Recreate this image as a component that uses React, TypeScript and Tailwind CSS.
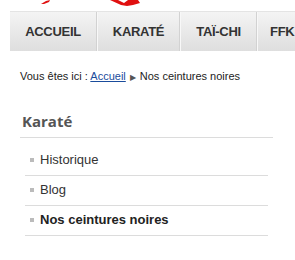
const navItems = ['ACCUEIL', 'KARATÉ', 'TAÏ-CHI', 'FFK'];
const sideLinks = [
  { label: 'Historique', active: false },
  { label: 'Blog', active: false },
  { label: 'Nos ceintures noires', active: true },
];

export default function App() {
  return (
    <div className="w-[295px] h-[260px] overflow-hidden bg-white font-['Liberation_Sans',Arial,sans-serif] text-[#333]">
      {/* bottom of the logo peeking above the menu */}
      <div className="h-[11px] relative">
        <svg className="absolute left-0 top-0" width="160" height="11" viewBox="0 0 160 11">
          <path d="M41 4 L46 1 L50 0 L49 2 L44 4 Z" fill="#e01010" />
          <path d="M110 0 L118 0 L124 3 L128 0 L138 0 L140 3 L133 5 L127 6 L121 5 Z" fill="#e01010" />
        </svg>
      </div>
      <nav className="ml-[10px] flex h-[40px] border-t border-[#e4e4e4] bg-gradient-to-b from-[#f4f4f4] to-[#dedede]">
        {navItems.map((item, i) => (
          <div
            key={item}
            className={
              'shrink-0 flex items-center justify-center text-[13px] font-bold tracking-[-0.3px] text-[#333] border-l border-[#f8f8f8] ' +
              (i === 0 ? 'w-[87px] border-l-0 border-r border-r-[#d2d2d2]' : i === 1 ? 'w-[83px] border-r border-r-[#d2d2d2]' : i === 2 ? 'w-[77px] border-r border-r-[#d2d2d2]' : 'w-[60px] justify-start pl-[12px]')
            }
          >
            {item}
          </div>
        ))}
      </nav>
      <div className="pl-[20px] pt-[17px] text-[11px] text-[#222]">
        Vous êtes ici : <a className="text-[#1a4c9c] underline">Accueil</a>
        <span className="text-[8px] text-[#555] mx-[4px]">▶</span>Nos ceintures noires
      </div>
      <div className="ml-[20px] w-[253px] mt-[25px]">
        <h2 className="pl-[2px] pb-[5px] text-[15px] font-bold text-[#555] font-['Open_Sans',sans-serif] border-b border-[#dcdcdc] leading-[22px]">
          Karaté
        </h2>
        <ul className="mt-[8px] ml-[5px] w-[243px]">
          {sideLinks.map((l) => (
            <li key={l.label} className="flex items-center h-[30px] border-b border-[#dcdcdc] text-[13px]">
              <span className="ml-[5px] mr-[6px] w-[4px] h-[4px] bg-[#bbb]" />
              <span className={l.active ? 'font-bold text-[#222]' : 'text-[#333]'}>{l.label}</span>
            </li>
          ))}
        </ul>
      </div>
    </div>
  );
}
